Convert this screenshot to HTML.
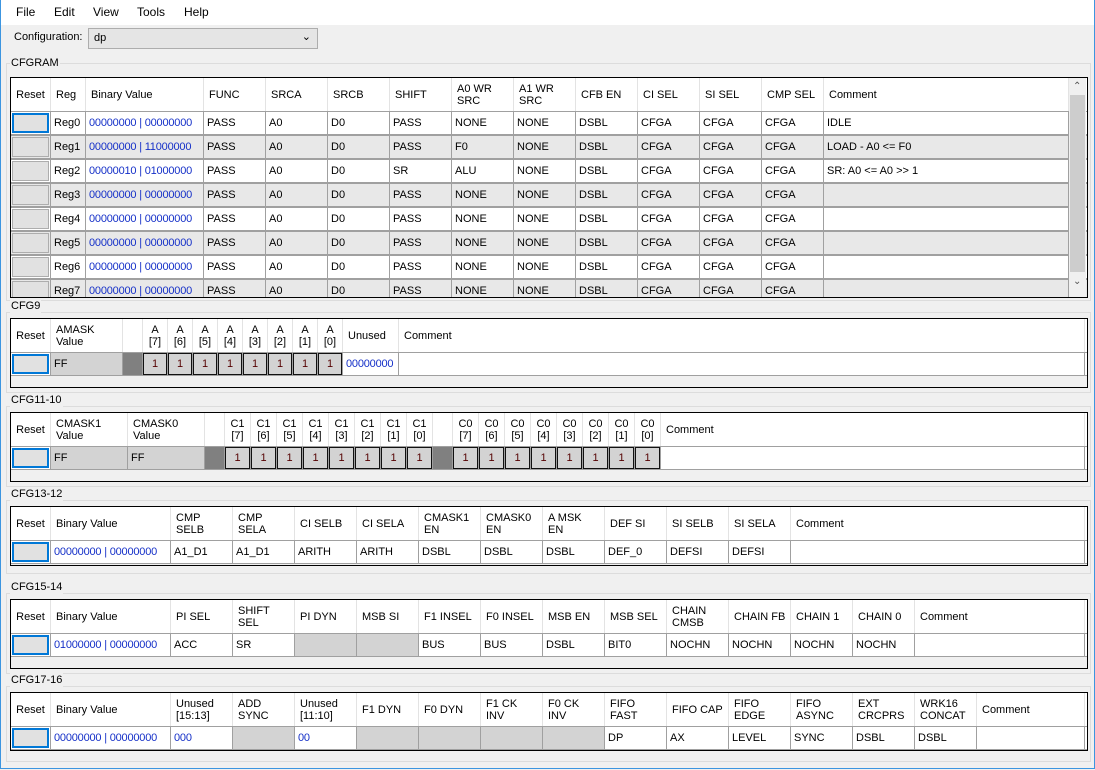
<!DOCTYPE html>
<html><head><meta charset="utf-8"><style>
*{margin:0;padding:0}
body{width:1095px;height:770px;background:#f0f0f0;font-family:"Liberation Sans",sans-serif;font-size:11px;color:#000;position:relative;overflow:hidden}
.frame{position:absolute;left:0;top:0;width:1093px;height:768px;border:1px solid #3c95e0;border-top:none}
.menu{position:absolute;left:1px;top:0;width:1093px;height:25px;background:#fff;font-size:12px}
.menu span{position:absolute;top:5px}
.abs{position:absolute}
.grp{position:absolute;left:6px;width:1083px;border:1px solid #dcdcdc}
.lbl{position:absolute;left:10px;background:#f0f0f0;padding:0 1px;line-height:14px}
.box{position:absolute;left:10px;border:1px solid #000;background:#f0f0f0;overflow:hidden}
.r{display:flex;height:33px;background:#fff}
.r>div{box-sizing:border-box;border-right:1px solid #e3e3e3;padding-left:5px;display:flex;align-items:center;flex:none;line-height:12px;overflow:hidden;white-space:pre}
.d{height:24px;background:#fff;border-top:1px solid #a0a0a0;border-bottom:1px solid #a0a0a0;box-sizing:border-box}
.d>div{border-right:1px solid #a0a0a0;padding-left:3px}
.alt{background:#e8e8e8}
.rs{padding:1px!important}
.rs i{display:block;width:100%;height:100%;box-sizing:border-box;background:#e1e1e1;border:1px solid #adadad}
.rs i.b{border:2px solid #0078d7}
.g{background:#d3d3d3}
.dk{background:#808080}
.bt{padding:0!important;background:#fff}
.bt i{display:flex;align-items:center;justify-content:center;font-style:normal;width:100%;height:100%;box-sizing:border-box;background:#d3d3d3;border:1px solid #111;color:#500}
.bl{color:#1530c8;letter-spacing:-0.2px}
.c{justify-content:center;padding-left:0!important;text-align:center}
</style></head><body>
<div class="frame"></div>
<div class="menu"><span style="left:15px">File</span><span style="left:53px">Edit</span><span style="left:92px">View</span><span style="left:136px">Tools</span><span style="left:183px">Help</span></div>
<div class="abs" style="left:14px;top:31px">Configuration:</div>
<div class="abs" style="left:88px;top:28px;width:228px;height:19px;background:#e5e5e5;border:1px solid #adadad"><span style="position:absolute;left:5px;top:3px">dp</span><span style="position:absolute;right:6px;top:1px;font-size:11px">&#8964;</span></div>

<!-- CFGRAM -->
<div class="grp" style="top:63px;height:236px"></div>
<div class="lbl" style="top:56px">CFGRAM</div>
<div class="box" style="top:77px;width:1076px;height:219px">
<div class="r">
<div class="c" style="width:40px">Reset</div><div style="width:35px">Reg</div><div style="width:118px">Binary Value</div><div style="width:62px">FUNC</div><div style="width:62px">SRCA</div><div style="width:62px">SRCB</div><div style="width:62px">SHIFT</div><div style="width:62px">A0 WR
SRC</div><div style="width:62px">A1 WR
SRC</div><div style="width:62px">CFB EN</div><div style="width:62px">CI SEL</div><div style="width:62px">SI SEL</div><div style="width:62px">CMP SEL</div><div style="width:245px">Comment</div></div>
<div class="r d"><div class="rs" style="width:40px"><i class="b"></i></div><div style="width:35px">Reg0</div><div class="bl" style="width:118px">00000000 | 00000000</div><div style="width:62px">PASS</div><div style="width:62px">A0</div><div style="width:62px">D0</div><div style="width:62px">PASS</div><div style="width:62px">NONE</div><div style="width:62px">NONE</div><div style="width:62px">DSBL</div><div style="width:62px">CFGA</div><div style="width:62px">CFGA</div><div style="width:62px">CFGA</div><div style="width:245px">IDLE</div></div>
<div class="r d alt"><div class="rs" style="width:40px"><i></i></div><div style="width:35px">Reg1</div><div class="bl" style="width:118px">00000000 | 11000000</div><div style="width:62px">PASS</div><div style="width:62px">A0</div><div style="width:62px">D0</div><div style="width:62px">PASS</div><div style="width:62px">F0</div><div style="width:62px">NONE</div><div style="width:62px">DSBL</div><div style="width:62px">CFGA</div><div style="width:62px">CFGA</div><div style="width:62px">CFGA</div><div style="width:245px">LOAD - A0 &lt;= F0</div></div>
<div class="r d"><div class="rs" style="width:40px"><i></i></div><div style="width:35px">Reg2</div><div class="bl" style="width:118px">00000010 | 01000000</div><div style="width:62px">PASS</div><div style="width:62px">A0</div><div style="width:62px">D0</div><div style="width:62px">SR</div><div style="width:62px">ALU</div><div style="width:62px">NONE</div><div style="width:62px">DSBL</div><div style="width:62px">CFGA</div><div style="width:62px">CFGA</div><div style="width:62px">CFGA</div><div style="width:245px">SR: A0 &lt;= A0 &gt;&gt; 1</div></div>
<div class="r d alt"><div class="rs" style="width:40px"><i></i></div><div style="width:35px">Reg3</div><div class="bl" style="width:118px">00000000 | 00000000</div><div style="width:62px">PASS</div><div style="width:62px">A0</div><div style="width:62px">D0</div><div style="width:62px">PASS</div><div style="width:62px">NONE</div><div style="width:62px">NONE</div><div style="width:62px">DSBL</div><div style="width:62px">CFGA</div><div style="width:62px">CFGA</div><div style="width:62px">CFGA</div><div style="width:245px"></div></div>
<div class="r d"><div class="rs" style="width:40px"><i></i></div><div style="width:35px">Reg4</div><div class="bl" style="width:118px">00000000 | 00000000</div><div style="width:62px">PASS</div><div style="width:62px">A0</div><div style="width:62px">D0</div><div style="width:62px">PASS</div><div style="width:62px">NONE</div><div style="width:62px">NONE</div><div style="width:62px">DSBL</div><div style="width:62px">CFGA</div><div style="width:62px">CFGA</div><div style="width:62px">CFGA</div><div style="width:245px"></div></div>
<div class="r d alt"><div class="rs" style="width:40px"><i></i></div><div style="width:35px">Reg5</div><div class="bl" style="width:118px">00000000 | 00000000</div><div style="width:62px">PASS</div><div style="width:62px">A0</div><div style="width:62px">D0</div><div style="width:62px">PASS</div><div style="width:62px">NONE</div><div style="width:62px">NONE</div><div style="width:62px">DSBL</div><div style="width:62px">CFGA</div><div style="width:62px">CFGA</div><div style="width:62px">CFGA</div><div style="width:245px"></div></div>
<div class="r d"><div class="rs" style="width:40px"><i></i></div><div style="width:35px">Reg6</div><div class="bl" style="width:118px">00000000 | 00000000</div><div style="width:62px">PASS</div><div style="width:62px">A0</div><div style="width:62px">D0</div><div style="width:62px">PASS</div><div style="width:62px">NONE</div><div style="width:62px">NONE</div><div style="width:62px">DSBL</div><div style="width:62px">CFGA</div><div style="width:62px">CFGA</div><div style="width:62px">CFGA</div><div style="width:245px"></div></div>
<div class="r d alt"><div class="rs" style="width:40px"><i></i></div><div style="width:35px">Reg7</div><div class="bl" style="width:118px">00000000 | 00000000</div><div style="width:62px">PASS</div><div style="width:62px">A0</div><div style="width:62px">D0</div><div style="width:62px">PASS</div><div style="width:62px">NONE</div><div style="width:62px">NONE</div><div style="width:62px">DSBL</div><div style="width:62px">CFGA</div><div style="width:62px">CFGA</div><div style="width:62px">CFGA</div><div style="width:245px"></div></div>
<div class="abs" style="left:1058px;top:0;width:17px;height:219px;background:#f0f0f0">
<div class="abs" style="left:4px;top:3px;font-size:10px;color:#555">&#8963;</div>
<div class="abs" style="left:1px;top:17px;width:15px;height:177px;background:#cdcdcd"></div>
<div class="abs" style="left:4px;top:198px;font-size:10px;color:#555">&#8964;</div></div>
</div>

<!-- CFG9 -->
<div class="grp" style="top:312px;height:79px"></div>
<div class="lbl" style="top:299px">CFG9</div>
<div class="box" style="top:318px;width:1076px;height:68px">
<div class="r"><div class="c" style="width:40px">Reset</div><div style="width:72px">AMASK
Value</div><div style="width:20px"></div>
<div class="c" style="width:25px">A
[7]</div><div class="c" style="width:25px">A
[6]</div><div class="c" style="width:25px">A
[5]</div><div class="c" style="width:25px">A
[4]</div><div class="c" style="width:25px">A
[3]</div><div class="c" style="width:25px">A
[2]</div><div class="c" style="width:25px">A
[1]</div><div class="c" style="width:25px">A
[0]</div><div style="width:56px">Unused</div><div style="width:686px">Comment</div></div>
<div class="r d"><div class="rs" style="width:40px"><i class="b"></i></div><div class="g" style="width:72px">FF</div><div class="dk" style="width:20px"></div>
<div class="bt" style="width:25px"><i>1</i></div><div class="bt" style="width:25px"><i>1</i></div><div class="bt" style="width:25px"><i>1</i></div><div class="bt" style="width:25px"><i>1</i></div><div class="bt" style="width:25px"><i>1</i></div><div class="bt" style="width:25px"><i>1</i></div><div class="bt" style="width:25px"><i>1</i></div><div class="bt" style="width:25px"><i>1</i></div>
<div class="bl" style="width:56px">00000000</div><div style="width:686px"></div></div>
</div>

<!-- CFG11-10 -->
<div class="grp" style="top:406px;height:79px"></div>
<div class="lbl" style="top:393px">CFG11-10</div>
<div class="box" style="top:412px;width:1076px;height:68px">
<div class="r"><div class="c" style="width:40px">Reset</div><div style="width:77px">CMASK1
Value</div><div style="width:77px">CMASK0
Value</div><div style="width:20px"></div>
<div class="c" style="width:26px">C1
[7]</div><div class="c" style="width:26px">C1
[6]</div><div class="c" style="width:26px">C1
[5]</div><div class="c" style="width:26px">C1
[4]</div><div class="c" style="width:26px">C1
[3]</div><div class="c" style="width:26px">C1
[2]</div><div class="c" style="width:26px">C1
[1]</div><div class="c" style="width:26px">C1
[0]</div><div style="width:20px"></div>
<div class="c" style="width:26px">C0
[7]</div><div class="c" style="width:26px">C0
[6]</div><div class="c" style="width:26px">C0
[5]</div><div class="c" style="width:26px">C0
[4]</div><div class="c" style="width:26px">C0
[3]</div><div class="c" style="width:26px">C0
[2]</div><div class="c" style="width:26px">C0
[1]</div><div class="c" style="width:26px">C0
[0]</div><div style="width:424px">Comment</div></div>
<div class="r d"><div class="rs" style="width:40px"><i class="b"></i></div><div class="g" style="width:77px">FF</div><div class="g" style="width:77px">FF</div><div class="dk" style="width:20px"></div>
<div class="bt" style="width:26px"><i>1</i></div><div class="bt" style="width:26px"><i>1</i></div><div class="bt" style="width:26px"><i>1</i></div><div class="bt" style="width:26px"><i>1</i></div><div class="bt" style="width:26px"><i>1</i></div><div class="bt" style="width:26px"><i>1</i></div><div class="bt" style="width:26px"><i>1</i></div><div class="bt" style="width:26px"><i>1</i></div>
<div class="dk" style="width:20px"></div>
<div class="bt" style="width:26px"><i>1</i></div><div class="bt" style="width:26px"><i>1</i></div><div class="bt" style="width:26px"><i>1</i></div><div class="bt" style="width:26px"><i>1</i></div><div class="bt" style="width:26px"><i>1</i></div><div class="bt" style="width:26px"><i>1</i></div><div class="bt" style="width:26px"><i>1</i></div><div class="bt" style="width:26px"><i>1</i></div>
<div style="width:424px"></div></div>
</div>

<!-- CFG13-12 -->
<div class="grp" style="top:500px;height:72px"></div>
<div class="lbl" style="top:487px">CFG13-12</div>
<div class="box" style="top:506px;width:1076px;height:58px">
<div class="r"><div class="c" style="width:40px">Reset</div><div style="width:120px">Binary Value</div><div style="width:62px">CMP
SELB</div><div style="width:62px">CMP
SELA</div><div style="width:62px">CI SELB</div><div style="width:62px">CI SELA</div><div style="width:62px">CMASK1
EN</div><div style="width:62px">CMASK0
EN</div><div style="width:62px">A MSK
EN</div><div style="width:62px">DEF SI</div><div style="width:62px">SI SELB</div><div style="width:62px">SI SELA</div><div style="width:294px">Comment</div></div>
<div class="r d"><div class="rs" style="width:40px"><i class="b"></i></div><div class="bl" style="width:120px">00000000 | 00000000</div><div style="width:62px">A1_D1</div><div style="width:62px">A1_D1</div><div style="width:62px">ARITH</div><div style="width:62px">ARITH</div><div style="width:62px">DSBL</div><div style="width:62px">DSBL</div><div style="width:62px">DSBL</div><div style="width:62px">DEF_0</div><div style="width:62px">DEFSI</div><div style="width:62px">DEFSI</div><div style="width:294px"></div></div>
</div>

<!-- CFG15-14 -->
<div class="grp" style="top:593px;height:79px"></div>
<div class="lbl" style="top:580px">CFG15-14</div>
<div class="box" style="top:599px;width:1076px;height:68px">
<div class="r"><div class="c" style="width:40px">Reset</div><div style="width:120px">Binary Value</div><div style="width:62px">PI SEL</div><div style="width:62px">SHIFT
SEL</div><div style="width:62px">PI DYN</div><div style="width:62px">MSB SI</div><div style="width:62px">F1 INSEL</div><div style="width:62px">F0 INSEL</div><div style="width:62px">MSB EN</div><div style="width:62px">MSB SEL</div><div style="width:62px">CHAIN
CMSB</div><div style="width:62px">CHAIN FB</div><div style="width:62px">CHAIN 1</div><div style="width:62px">CHAIN 0</div><div style="width:170px">Comment</div></div>
<div class="r d"><div class="rs" style="width:40px"><i class="b"></i></div><div class="bl" style="width:120px">01000000 | 00000000</div><div style="width:62px">ACC</div><div style="width:62px">SR</div><div class="g" style="width:62px"></div><div class="g" style="width:62px"></div><div style="width:62px">BUS</div><div style="width:62px">BUS</div><div style="width:62px">DSBL</div><div style="width:62px">BIT0</div><div style="width:62px">NOCHN</div><div style="width:62px">NOCHN</div><div style="width:62px">NOCHN</div><div style="width:62px">NOCHN</div><div style="width:170px"></div></div>
</div>

<!-- CFG17-16 -->
<div class="grp" style="top:686px;height:74px"></div>
<div class="lbl" style="top:673px">CFG17-16</div>
<div class="box" style="top:692px;width:1076px;height:57px">
<div class="r"><div class="c" style="width:40px">Reset</div><div style="width:120px">Binary Value</div><div style="width:62px">Unused
[15:13]</div><div style="width:62px">ADD
SYNC</div><div style="width:62px">Unused
[11:10]</div><div style="width:62px">F1 DYN</div><div style="width:62px">F0 DYN</div><div style="width:62px">F1 CK
INV</div><div style="width:62px">F0 CK
INV</div><div style="width:62px">FIFO
FAST</div><div style="width:62px">FIFO CAP</div><div style="width:62px">FIFO
EDGE</div><div style="width:62px">FIFO
ASYNC</div><div style="width:62px">EXT
CRCPRS</div><div style="width:62px">WRK16
CONCAT</div><div style="width:108px">Comment</div></div>
<div class="r d"><div class="rs" style="width:40px"><i class="b"></i></div><div class="bl" style="width:120px">00000000 | 00000000</div><div class="bl" style="width:62px">000</div><div class="g" style="width:62px"></div><div class="bl" style="width:62px">00</div><div class="g" style="width:62px"></div><div class="g" style="width:62px"></div><div class="g" style="width:62px"></div><div class="g" style="width:62px"></div><div style="width:62px">DP</div><div style="width:62px">AX</div><div style="width:62px">LEVEL</div><div style="width:62px">SYNC</div><div style="width:62px">DSBL</div><div style="width:62px">DSBL</div><div style="width:108px"></div></div>
</div>
</body></html>
